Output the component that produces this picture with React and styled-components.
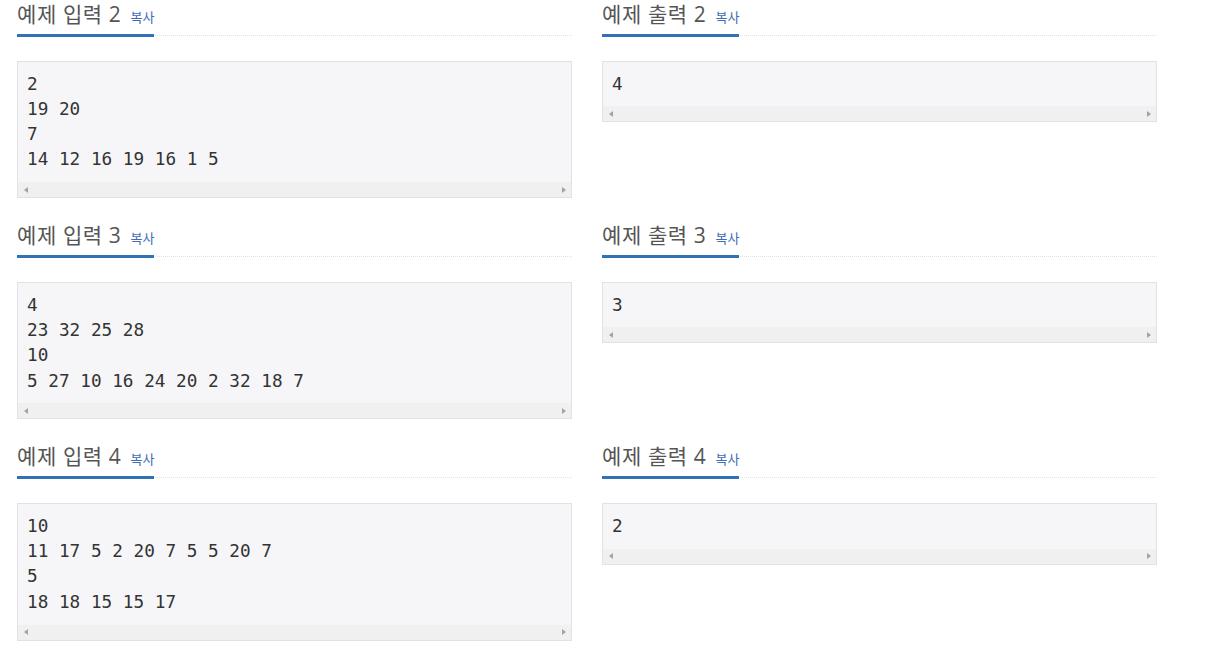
import React from "react";
import styled, { createGlobalStyle } from "styled-components";

const GlobalStyle = createGlobalStyle`
  html, body {
    margin: 0;
    padding: 0;
    background: #fff;
  }
  body {
    font-family: "Open Sans", "Noto Sans CJK KR", sans-serif;
    color: #333;
  }
`;

const Page = styled.div`
  display: grid;
  grid-template-columns: 555px 555px;
  column-gap: 30px;
  row-gap: 23px;
  padding-left: 17px;
  align-items: start;
`;

const Section = styled.div`
  display: flex;
  flex-direction: column;
`;

const Headline = styled.div`
  display: flex;
  align-items: flex-start;
  border-bottom: 1px dotted #dde2ea;
  margin-bottom: 25px;
  height: 35px;
`;

const Title = styled.h2`
  margin: 0;
  height: 34px;
  box-sizing: content-box;
  border-bottom: 3px solid #3172b7;
  font-size: 21px;
  line-height: 29px;
  font-weight: 400;
  letter-spacing: 0.6px;
  color: #555;
  white-space: nowrap;
  font-family: "Open Sans", "Noto Sans CJK KR", sans-serif;
`;

const Copy = styled.span`
  font-size: 13px;
  letter-spacing: 0;
  color: #3d6db5;
  margin-left: 3px;
  font-family: "Noto Sans CJK KR", sans-serif;
`;

const Pre = styled.div`
  border: 1px solid #e1e1e6;
  background: #f6f6f8;
  display: flex;
  flex-direction: column;
`;

const Code = styled.pre`
  margin: 0;
  padding: 9.5px 9px;
  font-family: "DejaVu Sans Mono", monospace;
  font-size: 17.7px;
  line-height: 25.3px;
  color: #333;
  white-space: pre;
`;

const Scrollbar = styled.div`
  height: 15px;
  background: #f0f0f0;
  display: flex;
  align-items: center;
  justify-content: space-between;
  padding: 0 5px 0 6px;
`;

const Arrow = styled.span`
  width: 0;
  height: 0;
  border-top: 3.5px solid transparent;
  border-bottom: 3.5px solid transparent;
  ${(p) =>
    p.dir === "left"
      ? "border-right: 4px solid #a3a3a3;"
      : "border-left: 4px solid #a3a3a3;"}
`;

const samples = [
  {
    n: 2,
    input: "2\n19 20\n7\n14 12 16 19 16 1 5",
    output: "4",
  },
  {
    n: 3,
    input: "4\n23 32 25 28\n10\n5 27 10 16 24 20 2 32 18 7",
    output: "3",
  },
  {
    n: 4,
    input: "10\n11 17 5 2 20 7 5 5 20 7\n5\n18 18 15 15 17",
    output: "2",
  },
];

function SampleBox({ title, text }) {
  return (
    <Section>
      <Headline>
        <Title>
          {title} <Copy>복사</Copy>
        </Title>
      </Headline>
      <Pre>
        <Code>{text}</Code>
        <Scrollbar>
          <Arrow dir="left" />
          <Arrow dir="right" />
        </Scrollbar>
      </Pre>
    </Section>
  );
}

export default function App() {
  return (
    <>
      <GlobalStyle />
      <Page>
        {samples.map((s) => (
          <React.Fragment key={s.n}>
            <SampleBox title={`예제 입력 ${s.n}`} text={s.input} />
            <SampleBox title={`예제 출력 ${s.n}`} text={s.output} />
          </React.Fragment>
        ))}
      </Page>
    </>
  );
}
